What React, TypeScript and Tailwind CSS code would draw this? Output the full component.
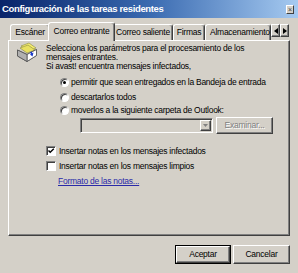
import React from "react";

const raised =
  "border border-t-white border-l-white border-r-[#404040] border-b-[#404040] shadow-[inset_-1px_-1px_0_#808080]";

function Radio({ checked }: { checked?: boolean }) {
  return (
    <span className="relative inline-block w-[9px] h-[9px] shrink-0 rounded-full border border-t-[#808080] border-l-[#808080] border-r-white border-b-white bg-white shadow-[inset_1px_1px_0_#404040]">
      {checked && (
        <span className="absolute left-[2px] top-[2px] w-[3px] h-[3px] rounded-full bg-black" />
      )}
    </span>
  );
}

function Check({ checked }: { checked?: boolean }) {
  return (
    <span className="relative inline-block w-[10px] h-[10px] shrink-0 border border-t-[#808080] border-l-[#808080] border-r-white border-b-white bg-white shadow-[inset_1px_1px_0_#404040]">
      {checked && (
        <svg width="8" height="8" viewBox="0 0 8 8" className="absolute left-0 top-0">
          <path d="M1.5 3.5 L3.2 5.3 L6.8 1.7" stroke="#000" strokeWidth="1.4" fill="none" />
        </svg>
      )}
    </span>
  );
}

function InboxIcon() {
  return (
    <svg width="22" height="21" viewBox="0 0 22 21">
      <polygon points="5,4 13,1 20,6 12,9" fill="#f4ec70" stroke="#8a8a40" strokeWidth="0.6" />
      <polygon points="4,6 12,3 19,8 11,11" fill="#e8e060" stroke="#8a8a40" strokeWidth="0.6" />
      <polygon points="1.5,8 11,12.5 20.5,7.5 20.5,13.5 11,19.5 1.5,14" fill="#c8c8c8" stroke="#505050" strokeWidth="0.8" />
      <polygon points="11,12.5 20.5,7.5 20.5,13.5 11,19.5" fill="#ffffff" stroke="#505050" strokeWidth="0.8" />
      <polygon points="1.5,8 11,12.5 11,19.5 1.5,14" fill="#b0b0b0" stroke="#505050" strokeWidth="0.8" />
      <polygon points="14,12.5 17.5,10.5 16.5,14.5" fill="#1c3cc8" />
      <rect x="14.6" y="9.6" width="1.6" height="3" fill="#1c3cc8" transform="rotate(-28 15.4 11)" />
    </svg>
  );
}

const tabBase =
  "flex items-center justify-center whitespace-nowrap overflow-hidden bg-[#d4d0c8] border-l border-t border-r border-l-white border-t-white border-r-[#404040] rounded-t-[3px] shadow-[inset_-1px_0_0_#808080]";

export default function App() {
  return (
    <div
      className="w-[298px] h-[273px] bg-[#d4d0c8] flex flex-col overflow-hidden text-black text-[8.5px] leading-[9px] tracking-[-0.25px]"
      style={{ fontFamily: '"Liberation Sans", Arial, sans-serif' }}
    >
      {/* Title bar */}
      <div className="h-[18px] shrink-0 flex items-center justify-between pl-[2px] pr-[4px] bg-gradient-to-r from-[#0a246a] via-[#3a6ab0] to-[#a6caf0]">
        <span className="text-white font-bold text-[9.5px] leading-[10px] tracking-[-0.35px]">
          Configuración de las tareas residentes
        </span>
        <span className="w-[8px] h-[9px] bg-[#d4d0c8] border border-t-white border-l-white border-r-[#404040] border-b-[#404040] flex items-center justify-center text-[7px] leading-[7px] text-[#404040] tracking-normal">
          ×
        </span>
      </div>

      {/* Tabs */}
      <div className="relative mt-[4px] h-[18px] shrink-0 flex items-end pl-[10px]">
        <div className={`${tabBase} w-[40px] h-[16px]`}>Escáner</div>
        <div className={`${tabBase} relative z-10 w-[67px] h-[19px] -mx-[2px] -mb-[1px] pb-[1px]`}>
          Correo entrante
        </div>
        <div className={`${tabBase} w-[60px] h-[16px]`}>Correo saliente</div>
        <div className={`${tabBase} w-[32px] h-[16px]`}>Firmas</div>
        <div className={`${tabBase} w-[66px] h-[16px] justify-start pl-[4px]`}>Almacenamiento</div>
        <div className="absolute right-[9px] top-[2px] flex">
          <div className={`${raised} w-[9px] h-[13px] bg-[#d4d0c8] flex items-center justify-center`}>
            <svg width="4" height="6" viewBox="0 0 4 6"><polygon points="4,0 0,3 4,6" fill="#000" /></svg>
          </div>
          <div className={`${raised} w-[9px] h-[13px] bg-[#d4d0c8] flex items-center justify-center`}>
            <svg width="4" height="6" viewBox="0 0 4 6"><polygon points="0,0 4,3 0,6" fill="#000" /></svg>
          </div>
        </div>
      </div>

      {/* Panel */}
      <div className="ml-[8px] w-[282px] h-[196px] shrink-0 border border-t-white border-l-white border-r-[#404040] border-b-[#404040] shadow-[inset_-1px_-1px_0_#808080] flex flex-col">
        <div className="flex pl-[7px] pt-[1px]">
          <div className="w-[22px] h-[21px] shrink-0">
            <InboxIcon />
          </div>
          <div className="ml-[8px] mt-[2px] flex flex-col">
            <span>Selecciona los parámetros para el procesamiento de los</span>
            <span>mensajes entrantes.</span>
            <span>Si avast! encuentra mensajes infectados,</span>
          </div>
        </div>

        <div className="flex flex-col pl-[51px]">
          <div className="mt-[4px] h-[14px] flex items-center gap-[2px]">
            <Radio checked />
            <span>permitir que sean entregados en la Bandeja de entrada</span>
          </div>
          <div className="mt-[1px] h-[14px] flex items-center gap-[2px]">
            <Radio />
            <span>descartarlos todos</span>
          </div>
          <div className="h-[13px] flex items-center gap-[2px]">
            <Radio />
            <span>moverlos a la siguiente carpeta de Outlook:</span>
          </div>
        </div>

        <div className="h-[17px] flex items-center pl-[71px] gap-[3px]">
          <div className="w-[133px] h-[15px] flex justify-end border border-t-[#808080] border-l-[#808080] border-r-white border-b-white shadow-[inset_1px_1px_0_#404040] bg-[#d4d0c8]">
            <div className={`${raised} mt-[1px] mr-[1px] w-[11px] h-[11px] flex items-center justify-center`}>
              <svg width="5" height="3" viewBox="0 0 5 3"><polygon points="0,0 5,0 2.5,3" fill="#808080" /></svg>
            </div>
          </div>
          <div className={`${raised} w-[57px] h-[17px] flex items-center justify-center text-[#808080] [text-shadow:1px_1px_0_#ffffff]`}>
            Examinar...
          </div>
        </div>

        <div className="mt-[10px] h-[14px] flex items-center pl-[37px] gap-[3px]">
          <Check checked />
          <span>Insertar notas en los mensajes infectados</span>
        </div>
        <div className="mt-[1px] h-[14px] flex items-center pl-[37px] gap-[3px]">
          <Check />
          <span>Insertar notas en los mensajes limpios</span>
        </div>
        <div className="mt-[1px] h-[14px] flex items-center pl-[49px]">
          <span className="text-[#2a2aa8] underline">Formato de las notas...</span>
        </div>
      </div>

      {/* Bottom buttons */}
      <div className="mt-[9px] flex justify-end pr-[8px] gap-[2px]">
        <div className="w-[56px] h-[19px] border border-black">
          <div className={`${raised} w-full h-full flex items-center justify-center`}>Aceptar</div>
        </div>
        <div className={`${raised} w-[57px] h-[19px] flex items-center justify-center`}>Cancelar</div>
      </div>
    </div>
  );
}
